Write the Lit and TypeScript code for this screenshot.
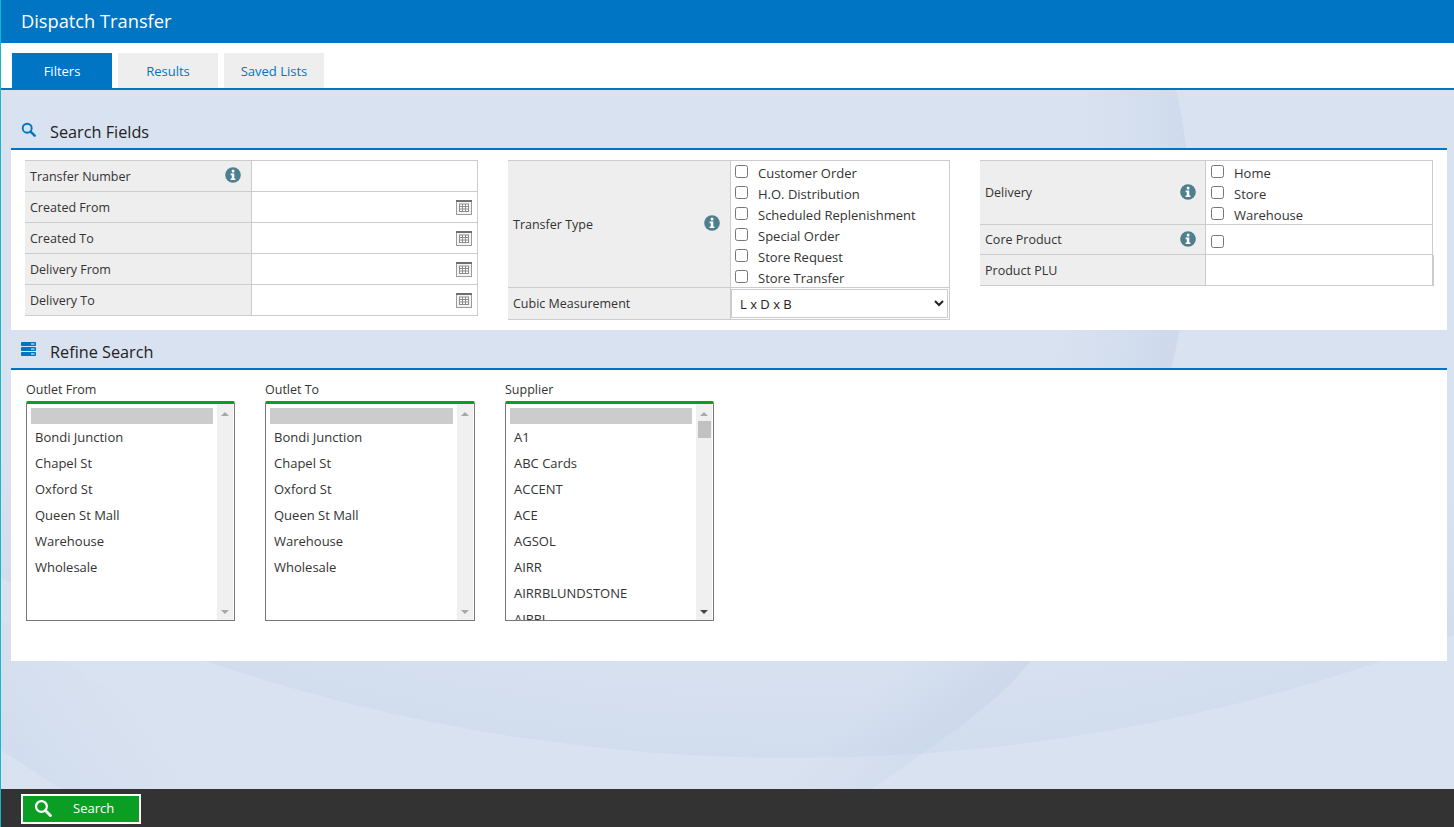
import { LitElement, html, css, svg } from 'lit';
import { customElement } from 'lit/decorators.js';

const OUTLETS = ['Bondi Junction', 'Chapel St', 'Oxford St', 'Queen St Mall', 'Warehouse', 'Wholesale'];
const SUPPLIERS = ['A1', 'ABC Cards', 'ACCENT', 'ACE', 'AGSOL', 'AIRR', 'AIRRBLUNDSTONE', 'AIRPL'];
const TYPES = ['Customer Order', 'H.O. Distribution', 'Scheduled Replenishment', 'Special Order', 'Store Request', 'Store Transfer'];
const DELIVERY = ['Home', 'Store', 'Warehouse'];

const searchIcon = html`<svg viewBox="0 0 16 16" width="15" height="15"><circle cx="6.600" cy="6.600" r="4.800" fill="none" stroke="currentColor" stroke-width="2"/><path d="M10.200 10.200 14.600 14.600" stroke="currentColor" stroke-width="2.600" stroke-linecap="round"/></svg>`;

const infoIcon = html`<svg class="info" viewBox="0 0 16 16" width="16" height="16"><circle cx="8" cy="8" r="7.800" fill="#4f7f8c"/><rect x="6.800" y="2.800" width="2.600" height="2.600" rx=".6" fill="#fff"/><path d="M5.600 6.600h3.700v4.800h1.100v1.600H5.600v-1.600h1.200V8.200H5.600z" fill="#fff"/></svg>`;

const calIcon = html`<svg class="cal" viewBox="0 0 16 15" width="16" height="15"><rect x=".5" y=".5" width="15" height="14" fill="#f4f4f4" stroke="#9a9a9a"/><rect x="0" y="0" width="16" height="2" fill="#6f6f6f"/><path d="M3 4h10v8H3z" fill="#fff"/><path d="M3 4h10M3 6.500h10M3 9h10M3 11.500h10M3.500 4v8M6.500 4v8M9.500 4v8M12.500 4v8" stroke="#8c8c8c" fill="none"/></svg>`;

const stackIcon = html`<svg viewBox="0 0 15 14" width="15" height="14"><g fill="#0075c4"><rect y="0" width="15" height="4" rx=".8"/><rect y="5" width="15" height="4" rx=".8"/><rect y="10" width="15" height="4" rx=".8"/></g><g fill="#fff"><rect x="10" y="1.500" width="3.500" height="1"/><rect x="10" y="6.500" width="3.500" height="1"/><rect x="10" y="11.500" width="3.500" height="1"/></g></svg>`;

const wallpaper = svg`<svg class="wall" viewBox="0 0 1454 827" preserveAspectRatio="none">
  <defs>
    <radialGradient id="bowl" gradientUnits="userSpaceOnUse" cx="793" cy="-1079" r="1837">
      <stop offset=".93" stop-color="#c8d6ea" stop-opacity="0"/>
      <stop offset="1" stop-color="#c8d6ea" stop-opacity=".45"/>
    </radialGradient>
    <radialGradient id="sweep" gradientUnits="userSpaceOnUse" cx="230" cy="130" r="960">
      <stop offset=".89" stop-color="#c4d3e8" stop-opacity="0"/>
      <stop offset="1" stop-color="#c4d3e8" stop-opacity=".5"/>
    </radialGradient>
    <linearGradient id="corner" gradientUnits="userSpaceOnUse" x1="30" y1="770" x2="130" y2="700">
      <stop offset="0" stop-color="#ccd9ec" stop-opacity=".6"/>
      <stop offset="1" stop-color="#ccd9ec" stop-opacity="0"/>
    </linearGradient>
  </defs>
  <circle cx="793" cy="-1079" r="1837" fill="url(#bowl)"/>
  <path d="M1176 90C1210 240 1190 440 1030 661 1000 702 940 740 872 789H0V90Z" fill="url(#sweep)"/>
  <path d="M0 750 60 789H260L0 620Z" fill="url(#corner)"/>
</svg>`;

@customElement('app-root')
export class AppRoot extends LitElement {
  static styles = css`
    :host {
      display: block;
      height: 827px;
      font-family: 'Open Sans', sans-serif;
      font-size: 13px;
      color: #333;
      overflow: hidden;
    }
    .page {
      position: relative;
      height: 827px;
      display: flex;
      flex-direction: column;
      background: #d9e2f0;
      border-left: 1px solid #17b8cc;
      box-sizing: border-box;
    }
    .wall {
      position: absolute;
      inset: 0;
      width: 100%;
      height: 100%;
    }
    .title {
      position: relative;
      height: 43px;
      flex: none;
      background: #0075c4;
      color: #fff;
      font-size: 18.25px;
      line-height: 42px;
      padding-left: 20px;
    }
    .tabs {
      position: relative;
      height: 45px;
      flex: none;
      background: #fff;
      border-bottom: 2px solid #0075c4;
      display: flex;
      align-items: flex-end;
      gap: 6px;
      padding-left: 11px;
    }
    .tab {
      width: 100px;
      height: 35px;
      line-height: 36px;
      text-align: center;
      background: #eee;
      color: #0075c4;
    }
    .tab.on {
      background: #0075c4;
      color: #fff;
    }
    .main {
      position: relative;
      flex: 1;
      padding: 0 7px 0 10px;
    }
    .heading {
      display: flex;
      align-items: center;
      border-bottom: 2px solid #0075c4;
      font-size: 16.25px;
      color: #222;
      padding-left: 10px;
      box-sizing: border-box;
    }
    .heading.first { height: 60px; padding-top: 26px; }
    .heading.second { height: 40px; padding-top: 6px; }
    .heading svg { color: #0075c4; margin-right: 14px; margin-top: -6px; flex: none; }
    .panel { background: #fff; }
    .fields {
      height: 180px;
      box-sizing: border-box;
      padding: 10px 14px 0 14px;
      display: flex;
      align-items: flex-start;
      gap: 30px;
    }
    .tbl {
      display: grid;
      border-top: 1px solid #ccc;
      flex: none;
    }
    .tbl.a { width: 453px; grid-template-columns: 226px 227px; }
    .tbl.b { width: 442px; grid-template-columns: 222px 220px; grid-template-rows: 127px 32px; }
    .tbl.c { width: 453px; grid-template-columns: 225px 228px; grid-template-rows: 64px 30px 31px; }
    .lab {
      background: #eee;
      border-bottom: 1px solid #ccc;
      display: flex;
      align-items: center;
      justify-content: space-between;
      padding: 0 10px 0 5px;
      box-sizing: border-box;
      color: #333;
      font-size: 12.5px;
    }
    .tbl.c .lab { padding-right: 9px; }
    .lab.raise { padding-bottom: 1px; }
    .lab .info { flex: none; margin-top: -2px; }
    .val {
      border-left: 1px solid #ccc;
      border-right: 1px solid #ccc;
      border-bottom: 1px solid #ccc;
      display: flex;
      align-items: center;
      justify-content: flex-end;
      padding-right: 5px;
      box-sizing: border-box;
    }
    .rowh { height: 31px; }
    .tbl.b .rowh, .tbl.c .rowh { height: auto; }
    .checks {
      display: flex;
      flex-direction: column;
      align-items: flex-start;
      justify-content: flex-start;
      padding: 1px 0 0 4px;
    }
    .tbl.c .checks { padding-left: 5px; }
    .check {
      display: flex;
      align-items: center;
      flex: none;
      height: 21px;
      color: #333;
    }
    .check input, .lone {
      width: 13px;
      height: 13px;
      margin: 0 10px 3px 0;
      flex: none;
    }
    .lone { margin: 3px 0 0 5px; }
    .val.left { justify-content: flex-start; padding: 0; }
    .val.wide { margin-right: -1px; border-right-width: 2px; }
    .sel {
      width: 217px;
      height: 29px;
      border: 1px solid #ccc;
      background: #fff;
      font-family: 'Open Sans', sans-serif;
      font-size: 13px;
      color: #222;
      padding-left: 4px;
    }
    .refine {
      height: 291px;
      box-sizing: border-box;
      padding: 10px 0 0 15px;
      display: grid;
      grid-template-columns: 209px 210px 209px;
      align-content: start;
      gap: 30px;
    }
    .col-label { height: 21px; line-height: 19px; color: #333; font-size: 12.5px; }
    .box {
      height: 220px;
      box-sizing: border-box;
      border: 1px solid #777;
      border-top: 3px solid #0a9e24;
      border-radius: 2px 2px 0 0;
      display: flex;
      overflow: hidden;
    }
    .items {
      flex: 1;
      padding: 4px 4px 0 4px;
      overflow: hidden;
      min-width: 0;
    }
    .blank { height: 16px; background: #ccc; }
    .item { height: 26px; line-height: 26px; padding-left: 4px; color: #333; }
    .bar {
      width: 16px;
      margin: 0 1px 0 0;
      background: #f0f0f0;
      flex: none;
      display: flex;
      flex-direction: column;
      align-items: center;
      position: relative;
    }
    .up, .down {
      width: 0;
      height: 0;
      border-left: 4px solid transparent;
      border-right: 4px solid transparent;
      position: absolute;
    }
    .up { top: 8px; border-bottom: 4px solid #a8a8a8; }
    .down { bottom: 6px; border-top: 4px solid #a8a8a8; }
    .down.live { border-top-color: #444; }
    .thumb {
      position: absolute;
      top: 17px;
      left: 2px;
      width: 13px;
      height: 17px;
      background: #c1c1c1;
    }
    .footer {
      position: relative;
      height: 38px;
      flex: none;
      background: #333;
      display: flex;
      align-items: center;
      padding: 2px 0 0 20px;
      box-sizing: border-box;
    }
    .go {
      width: 120px;
      height: 30px;
      box-sizing: border-box;
      border: 2px solid #fff;
      background: #0a9e24;
      color: #fff;
      font: 13px 'Open Sans', sans-serif;
      display: flex;
      align-items: center;
      padding: 0 0 2px 11px;
    }
    .go svg { margin-right: 21px; margin-top: -1px; flex: none; width: 18px; height: 18px; }
  `;

  private input(label: string, cal: boolean, info = false) {
    return html`
      <div class="lab rowh"><span>${label}</span>${info ? infoIcon : ''}</div>
      <div class="val rowh">${cal ? calIcon : ''}</div>
    `;
  }

  private checks(items: string[]) {
    return items.map(t => html`<label class="check"><input type="checkbox" />${t}</label>`);
  }

  private list(label: string, items: string[], scrolls = false) {
    return html`
      <div>
        <div class="col-label">${label}</div>
        <div class="box">
          <div class="items">
            <div class="blank"></div>
            ${items.map(t => html`<div class="item">${t}</div>`)}
          </div>
          <div class="bar">
            <span class="up"></span>
            ${scrolls ? html`<span class="thumb"></span>` : ''}
            <span class="down ${scrolls ? 'live' : ''}"></span>
          </div>
        </div>
      </div>
    `;
  }

  render() {
    return html`
      <div class="page">
        ${wallpaper}
        <div class="title">Dispatch Transfer</div>
        <div class="tabs">
          <div class="tab on">Filters</div>
          <div class="tab">Results</div>
          <div class="tab">Saved Lists</div>
        </div>
        <div class="main">
          <div class="heading first">${searchIcon}Search Fields</div>
          <div class="panel fields">
            <div class="tbl a">
              ${this.input('Transfer Number', false, true)}
              ${this.input('Created From', true)}
              ${this.input('Created To', true)}
              ${this.input('Delivery From', true)}
              ${this.input('Delivery To', true)}
            </div>
            <div class="tbl b">
              <div class="lab"><span>Transfer Type</span>${infoIcon}</div>
              <div class="val checks">${this.checks(TYPES)}</div>
              <div class="lab raise rowh">Cubic Measurement</div>
              <div class="val left rowh">
                <select class="sel"><option>L x D x B</option></select>
              </div>
            </div>
            <div class="tbl c">
              <div class="lab"><span>Delivery</span>${infoIcon}</div>
              <div class="val checks">${this.checks(DELIVERY)}</div>
              <div class="lab"><span>Core Product</span>${infoIcon}</div>
              <div class="val left"><input class="lone" type="checkbox" /></div>
              <div class="lab rowh">Product PLU</div>
              <div class="val wide rowh"></div>
            </div>
          </div>
          <div class="heading second">${stackIcon}Refine Search</div>
          <div class="panel refine">
            ${this.list('Outlet From', OUTLETS)}
            ${this.list('Outlet To', OUTLETS)}
            ${this.list('Supplier', SUPPLIERS, true)}
          </div>
        </div>
        <div class="footer">
          <button class="go">${searchIcon}Search</button>
        </div>
      </div>
    `;
  }
}
